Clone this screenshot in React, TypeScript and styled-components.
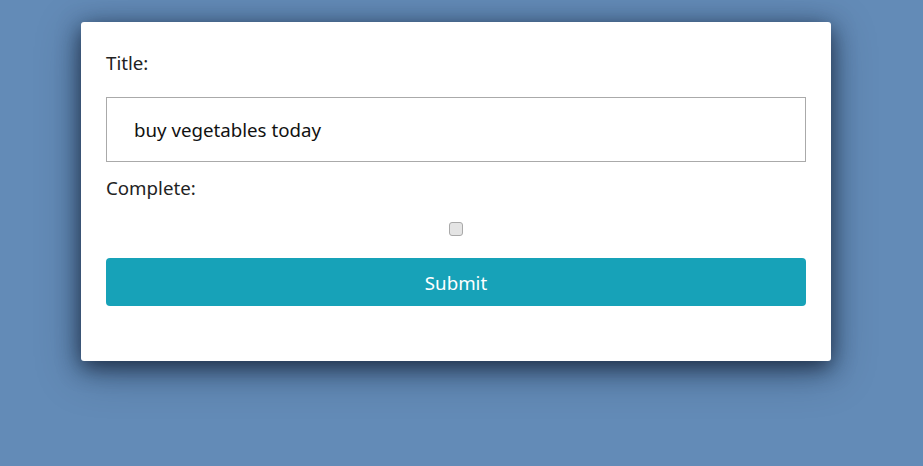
import React from "react";
import styled, { createGlobalStyle } from "styled-components";

const Global = createGlobalStyle`
  html, body { margin: 0; padding: 0; }
  body {
    background: #638bb7;
    font-family: "Segoe UI", "Noto Sans", "Open Sans", sans-serif;
    width: 923px;
    height: 466px;
    overflow: hidden;
  }
`;

const Page = styled.div`
  display: flex;
  justify-content: center;
  padding-top: 22px;
  padding-right: 11px;
`;

const Card = styled.form`
  width: 750px;
  box-sizing: border-box;
  background: #fff;
  border-radius: 3px;
  padding: 25px 25px 55px;
  box-shadow: 0 6px 22px rgba(10, 20, 40, 0.7), 0 10px 44px rgba(10, 20, 40, 0.35);
  display: flex;
  flex-direction: column;
`;

const Label = styled.label`
  font-size: 18.7px;
  color: #222;
  line-height: 24px;
`;

const TitleLabel = styled(Label)`
  margin-top: 4px;
  margin-bottom: 22px;
`;

const TextInput = styled.input`
  height: 65px;
  box-sizing: border-box;
  border: 1px solid #aaa;
  padding: 0 27px;
  font-family: inherit;
  font-size: 18.7px;
  color: #111;
  outline: none;
  margin-bottom: 14px;
`;

const CheckRow = styled.div`
  display: flex;
  justify-content: center;
  padding: 22px 0 22px;
`;

const Check = styled.input`
  appearance: none;
  width: 14px;
  height: 14px;
  margin: 0 0 0 -1px;
  box-sizing: border-box;
  border: 1px solid #a9a9a9;
  border-radius: 3px;
  background: #e4e4e4;
`;

const Submit = styled.button`
  height: 48px;
  border: none;
  border-radius: 4px;
  background: #17a2b8;
  color: #fff;
  font-family: inherit;
  font-size: 18.7px;
`;

export default function App() {
  return (
    <>
      <Global />
      <Page>
        <Card onSubmit={(e) => e.preventDefault()}>
          <TitleLabel>Title:</TitleLabel>
          <TextInput defaultValue="buy vegetables today" />
          <Label>Complete:</Label>
          <CheckRow>
            <Check type="checkbox" />
          </CheckRow>
          <Submit type="submit">Submit</Submit>
        </Card>
      </Page>
    </>
  );
}
